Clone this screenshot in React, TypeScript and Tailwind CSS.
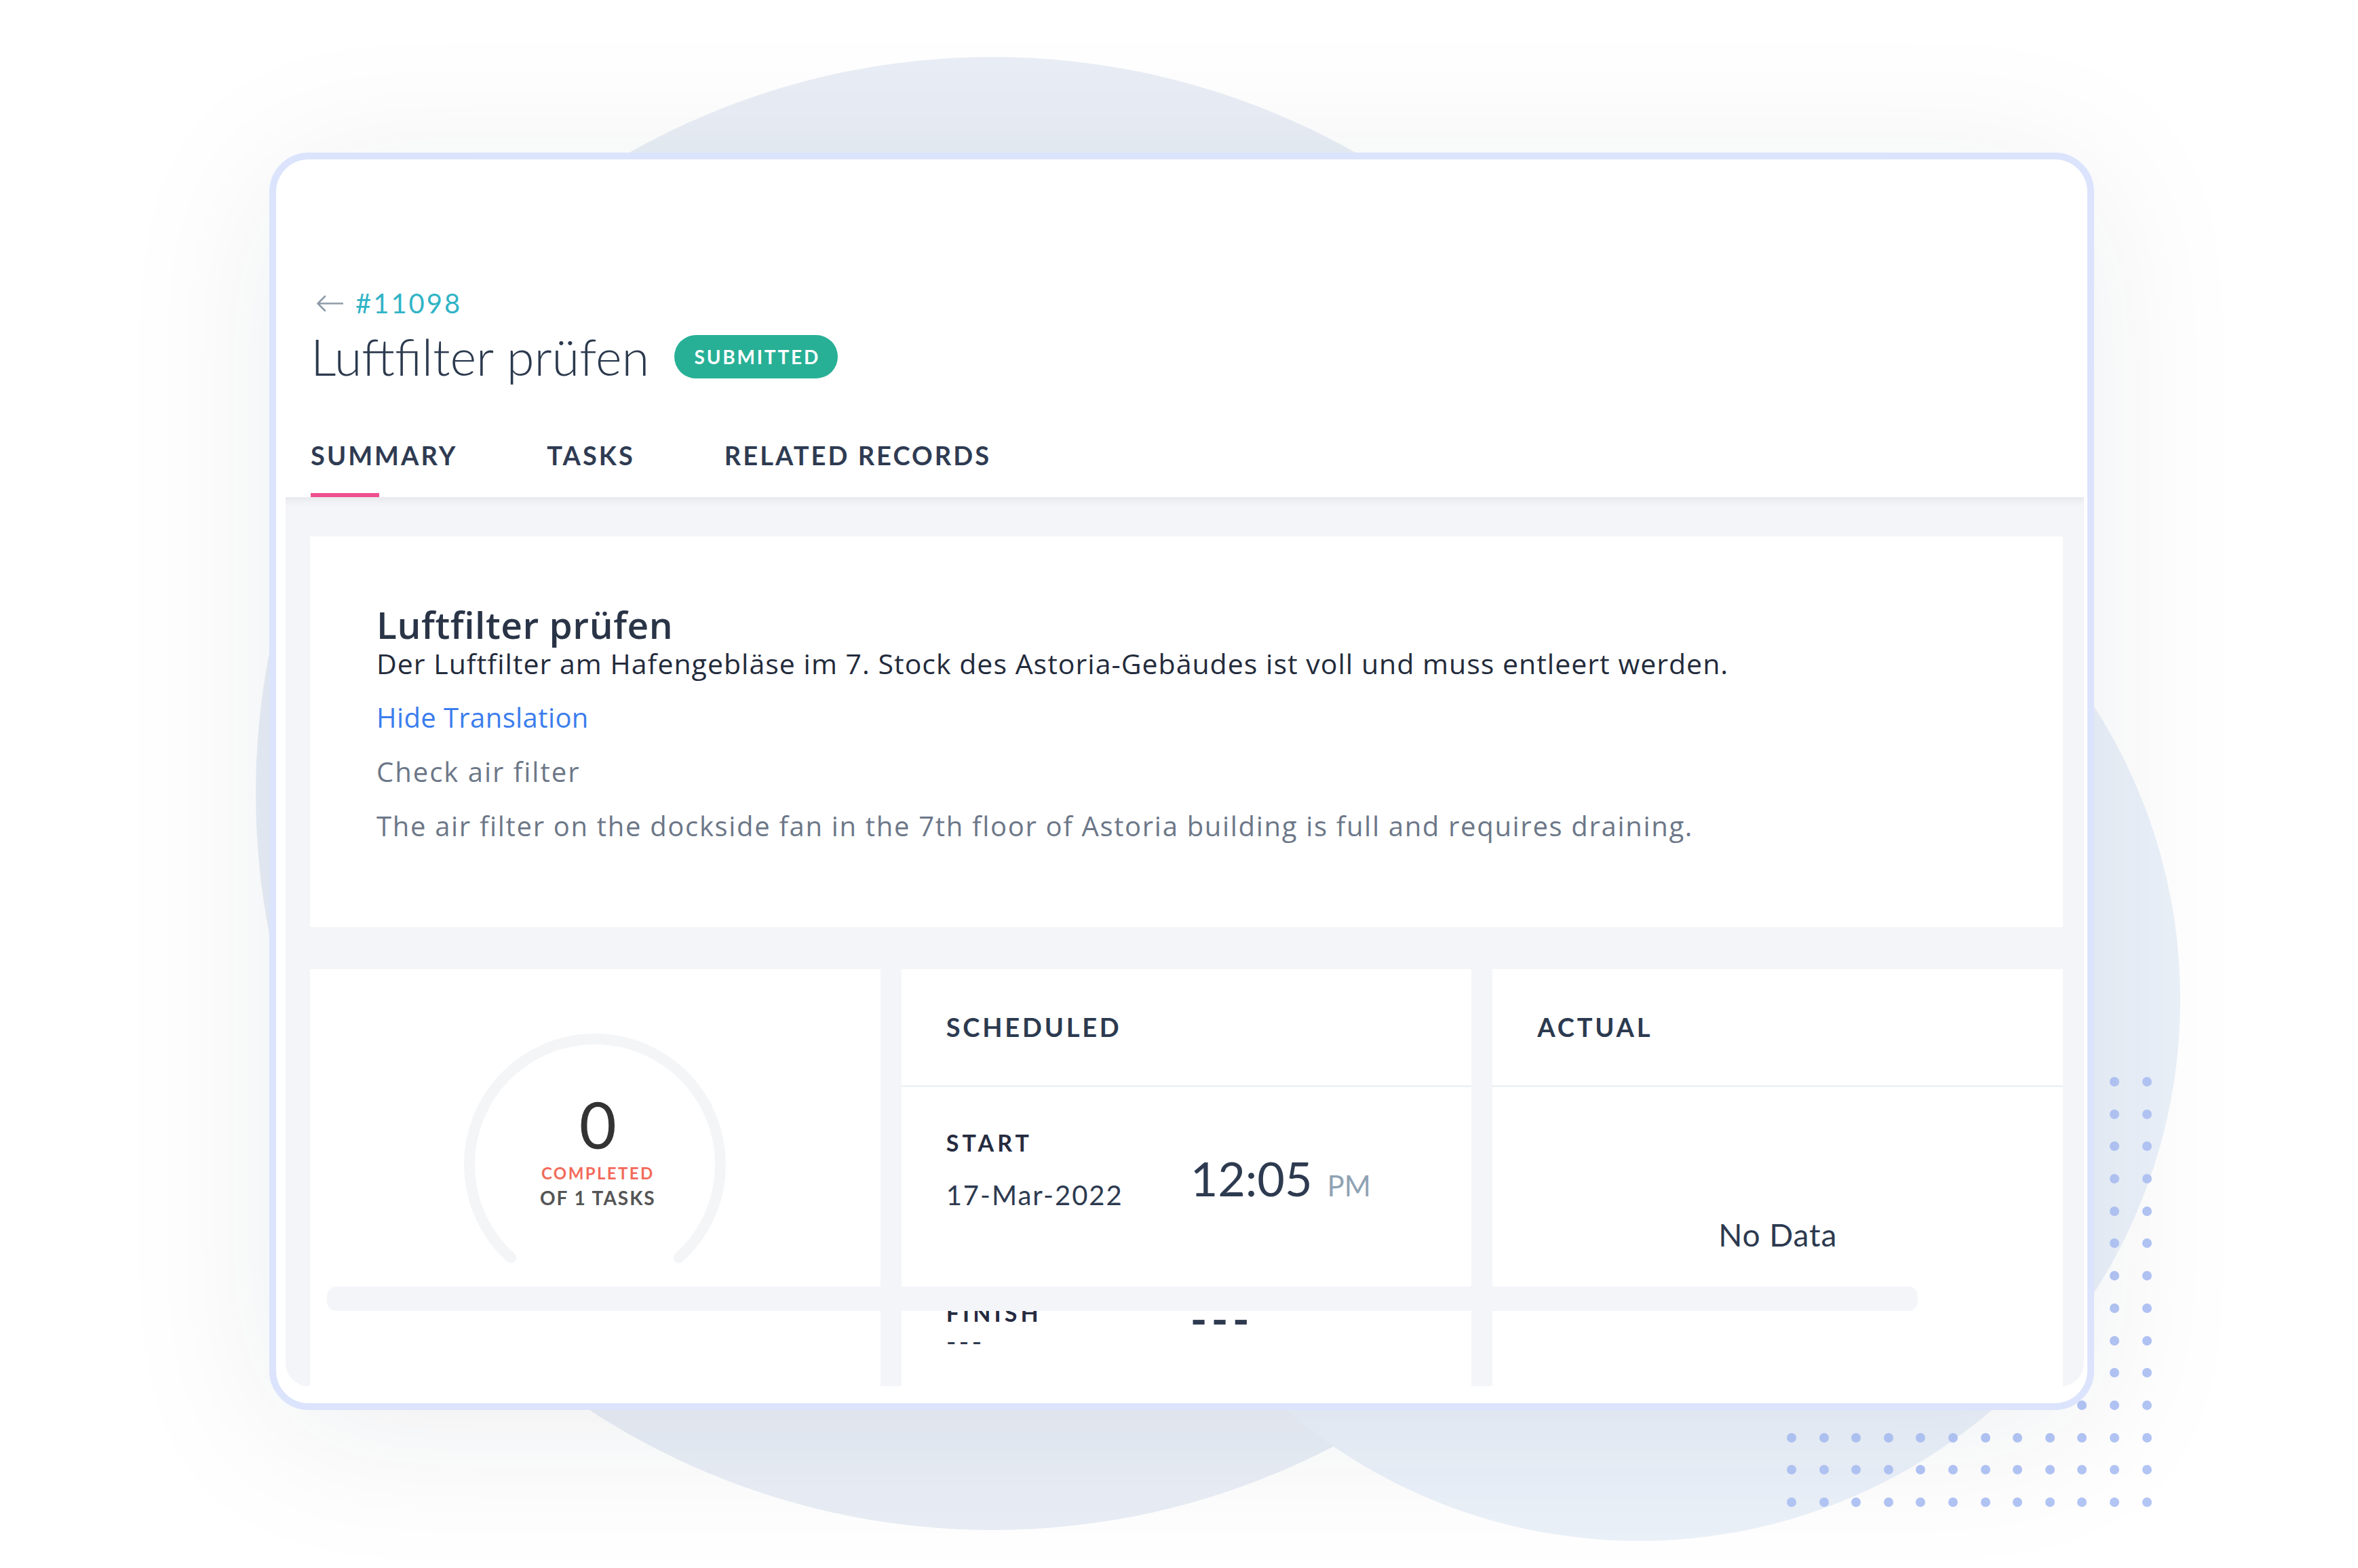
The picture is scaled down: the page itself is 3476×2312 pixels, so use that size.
import React from 'react'

const tabs = ['SUMMARY', 'TASKS', 'RELATED RECORDS']

function BackArrow() {
  return (
    <svg width="40" height="26" viewBox="0 0 40 26" fill="none" className="ml-[8px]">
      <path d="M39 13.5H3M13 3L2.5 13.5L13 24" stroke="#8d9aa8" strokeWidth="2.6" strokeLinecap="round" strokeLinejoin="round" />
    </svg>
  )
}

function Gauge() {
  return (
    <div className="grid">
      <svg width="400" height="400" viewBox="0 0 400 400" className="[grid-area:1/1]">
        <path d="M76.2 337.5A185 185 0 1 1 323.8 337.5" stroke="#f4f5f7" strokeWidth="16" strokeLinecap="round" fill="none" />
      </svg>
      <div className="[grid-area:1/1] flex flex-col items-center pt-[92px] pl-[8px]">
        <span className="text-[95px] leading-[96px] text-[#333333]">0</span>
        <span className="mt-[10px] text-[24px] leading-[30px] font-bold tracking-[0.1em] text-[#f26a5a]">COMPLETED</span>
        <span className="mt-[4px] text-[28px] leading-[34px] font-bold tracking-[0.07em] text-[#555555]">OF 1 TASKS</span>
      </div>
    </div>
  )
}

function CardHeader({ title }: { title: string }) {
  return (
    <div className="h-[174px] flex items-center pl-[66px] border-b-[3px] border-[#eef2f5]">
      <span className="text-[38px] font-bold tracking-[0.1em] text-[#2c3a4f]">{title}</span>
    </div>
  )
}

export default function App() {
  const dots = Array.from({ length: 12 * 14 })

  return (
    <div className="relative w-[3476px] h-[2312px] overflow-hidden bg-white font-['Lato',sans-serif]">
      {/* backdrop shapes */}
      <div className="absolute left-[377px] top-[84px] w-[2172px] h-[2172px] rounded-full bg-[#e9eef6]" />
      <div className="absolute left-[1618px] top-[676px] w-[1596px] h-[1596px] rounded-full bg-[#ebf1f9]" />
      <div className="absolute left-[2634px] top-[1588px] grid grid-cols-[repeat(12,14px)] gap-x-[33.6px] gap-y-[33.7px]">
        {dots.map((_, i) => (
          <span key={i} className="w-[14px] h-[14px] rounded-full bg-[#b3c6f6]" />
        ))}
      </div>

      <div className="relative pl-[397px] pt-[225px]">
        <div className="w-[2690px] h-[1854px] rounded-[58px] border-[10px] border-[#dbe4fc] bg-white shadow-[0_30px_240px_rgba(30,40,60,0.08)] pl-[14px] pr-[5px] pb-[25px] flex flex-col overflow-hidden">
          {/* page header */}
          <div className="pl-[37px] pt-[188px]">
            <div className="flex items-center h-[48px] gap-[18px]">
              <BackArrow />
              <span className="text-[40px] leading-[48px] tracking-[0.075em] text-[#31b4c6]">#11098</span>
            </div>
            <div className="mt-[15px] h-[80px] flex items-center gap-[37px]">
              <span className="text-[74px] leading-[80px] font-light text-[#2c3a4e]">Luftfilter prüfen</span>
              <span className="h-[64px] w-[241px] rounded-full bg-[#27b096] flex items-center justify-center pl-[3px] text-[28px] font-bold tracking-[0.1em] text-white">
                SUBMITTED
              </span>
            </div>
            <div className="mt-[81px] flex gap-[132px]">
              {tabs.map((t, i) => (
                <div key={t} className="flex flex-col">
                  <span className="text-[38px] leading-[48px] font-bold tracking-[0.08em] text-[#2f3b52]">{t}</span>
                  <div className={i === 0 ? 'mt-[32px] h-[6px] w-[101px] bg-[#ef4f8f]' : 'mt-[32px] h-[6px]'} />
                </div>
              ))}
            </div>
          </div>

          {/* content */}
          <div className="relative flex-1 overflow-hidden rounded-b-[34px] bg-[#f4f5f8] pt-[58px] pl-[36px] pr-[31px] shadow-[inset_0_12px_14px_-10px_rgba(0,0,0,0.08)]">
            <div className="h-[576px] bg-white pl-[98px] pt-[95px] font-['Open_Sans',sans-serif]">
              <div className="text-[55px] leading-[70px] font-semibold tracking-[0.01em] text-[#2a3447]">Luftfilter prüfen</div>
              <div className="text-[41px] leading-[44px] tracking-[0.025em] text-[#232b3b]">
                Der Luftfilter am Hafengebläse im 7. Stock des Astoria-Gebäudes ist voll und muss entleert werden.
              </div>
              <div className="mt-[34px] text-[40px] leading-[48px] tracking-[0.01em] text-[#3b7ded]">Hide Translation</div>
              <div className="mt-[32px] text-[40px] leading-[48px] tracking-[0.05em] text-[#6c7788]">Check air filter</div>
              <div className="mt-[32px] text-[40px] leading-[48px] tracking-[0.042em] text-[#6c7788]">
                The air filter on the dockside fan in the 7th floor of Astoria building is full and requires draining.
              </div>
            </div>

            <div className="mt-[62px] grid grid-cols-3 gap-x-[31px]">
              <div className="h-[700px] bg-white flex justify-center pt-[88px]">
                <Gauge />
              </div>

              <div className="h-[700px] bg-white">
                <CardHeader title="SCHEDULED" />
                <div className="pl-[66px] pt-[62px]">
                  <div className="flex items-start">
                    <div className="w-[360px] flex flex-col">
                      <span className="text-[34px] leading-[40px] font-bold tracking-[0.15em] text-[#262b3f]">START</span>
                      <span className="mt-[33px] text-[40px] leading-[48px] tracking-[0.05em] text-[#2d3a4f]">17-Mar-2022</span>
                    </div>
                    <div className="mt-[32px] flex items-baseline gap-[22px]">
                      <span className="text-[70px] leading-[80px] text-[#2d3a4f]">12:05</span>
                      <span className="text-[42px] text-[#8fa2b3]">PM</span>
                    </div>
                  </div>
                  <div className="mt-[130px] flex items-start">
                    <div className="w-[360px] flex flex-col">
                      <span className="text-[34px] leading-[40px] font-bold tracking-[0.15em] text-[#262b3f]">FINISH</span>
                      <span className="mt-[2px] text-[40px] leading-[40px] tracking-[0.1em] text-[#2d3a4f]">---</span>
                    </div>
                    <span className="-mt-[4px] text-[66px] leading-[66px] font-bold tracking-[0.1em] text-[#2d3a4f]">---</span>
                  </div>
                </div>
              </div>

              <div className="h-[700px] bg-white">
                <CardHeader title="ACTUAL" />
                <div className="pt-[190px] text-center text-[46px] leading-[56px] tracking-[0.02em] text-[#2d3a4f]">No Data</div>
              </div>
            </div>

            {/* scroll track lying over the cards */}
            <div className="absolute left-[61px] top-[1164px] w-[2345px] h-[36px] rounded-[14px] bg-[#f3f5f9]" />
          </div>
        </div>
      </div>
    </div>
  )
}
